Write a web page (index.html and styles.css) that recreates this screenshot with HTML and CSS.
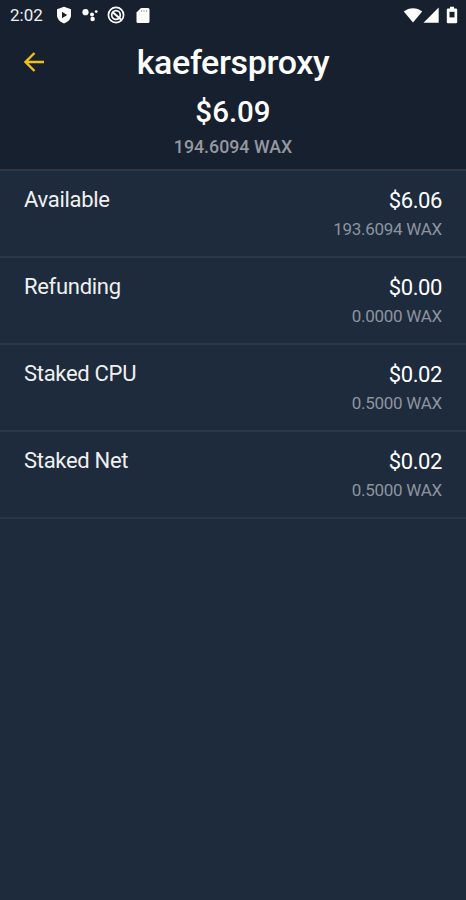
FILE: index.html
```html
<!DOCTYPE html>
<html lang="en">
  <head>
    <meta charset="UTF-8" />
    <meta name="viewport" content="width=device-width, initial-scale=1.0" />
    <title>kaefersproxy</title>
    <link rel="stylesheet" href="styles.css">
  </head>
  <body>
    <header class="header">
      <div class="status-bar">
        <span class="time">2:02</span>
        <svg class="icon-shield" width="16" height="18" viewBox="0 0 16 18">
          <path fill="#fff" d="M8 .8 15 3.2V9c0 4-3 7-7 8.4C4 16 1 13 1 9V3.2z" />
          <path fill="#172130" d="M6 5.8v6.4L11.2 9z" />
        </svg>
        <svg class="icon-dots" width="18" height="16" viewBox="0 0 18 16">
          <g fill="#fff">
            <circle cx="4.5" cy="5.2" r="3.1" />
            <circle cx="11" cy="7.4" r="2" />
            <circle cx="15.2" cy="4.6" r="1.4" />
            <circle cx="11.6" cy="12" r="2.2" />
          </g>
        </svg>
        <svg class="icon-circle" width="18" height="18" viewBox="0 0 18 18">
          <g fill="none" stroke="#fff">
            <circle cx="9" cy="9" r="7.6" stroke-width="1.7" />
            <circle cx="9" cy="9" r="4.3" stroke-width="1.7" />
            <path stroke-width="2" d="m5.5 6 8.5 7.5" />
          </g>
        </svg>
        <svg class="icon-sd" width="14" height="17" viewBox="0 0 14 17">
          <path fill="#fff" d="M5 1h7a1.5 1.5 0 0 1 1.5 1.5v12A1.5 1.5 0 0 1 12 16H2a1.5 1.5 0 0 1-1.5-1.5v-9z" />
          <path stroke="#172130" stroke-opacity=".35" d="M5.5 3v2M8 3v2M10.5 3v2" />
        </svg>
        <svg class="icon-wifi" width="20" height="17" viewBox="0 0 20 17">
          <path fill="#fff" d="M10 15.6.8 4.6C6 .1 14 .1 19.2 4.6z" />
        </svg>
        <svg class="icon-signal" width="16" height="16" viewBox="0 0 16 16">
          <path fill="#fff" d="M15.7.5v15.2H.5z" />
        </svg>
        <svg class="icon-battery" width="12" height="18" viewBox="0 0 12 18">
          <path fill="#fff" d="M4 .8h4v1.7h2a1.2 1.2 0 0 1 1.2 1.2V16a1.2 1.2 0 0 1-1.2 1.2H2A1.2 1.2 0 0 1 .8 16V3.7A1.2 1.2 0 0 1 2 2.5h2z" />
          <path fill="#172130" d="M3.5 5.8h5v5.6h-5z" />
        </svg>
      </div>

      <div class="title-bar">
        <svg class="back" width="22" height="22" viewBox="0 0 22 22">
          <path fill="none" stroke="#f2c012" stroke-width="2.4" d="M21 11H2.5M11.5 2 2.5 11l9 9" />
        </svg>
        <h1 class="title">kaefersproxy</h1>
      </div>
      <div class="total">$6.09</div>
      <div class="total-wax">194.6094 WAX</div>
    </header>

    <main class="balances">
      <div class="row">
        <span class="label">Available</span>
        <div class="values">
          <span class="usd">$6.06</span>
          <span class="wax">193.6094 WAX</span>
        </div>
      </div>
      <div class="row">
        <span class="label">Refunding</span>
        <div class="values">
          <span class="usd">$0.00</span>
          <span class="wax">0.0000 WAX</span>
        </div>
      </div>
      <div class="row">
        <span class="label">Staked CPU</span>
        <div class="values">
          <span class="usd">$0.02</span>
          <span class="wax">0.5000 WAX</span>
        </div>
      </div>
      <div class="row">
        <span class="label">Staked Net</span>
        <div class="values">
          <span class="usd">$0.02</span>
          <span class="wax">0.5000 WAX</span>
        </div>
      </div>
    </main>
  </body>
</html>
```

FILE: styles.css
```css
* {
  box-sizing: border-box;
}

body {
  margin: 0;
  min-height: 100vh;
  background-color: #1d2b3d;
  color: #fff;
  font-family: Roboto, sans-serif;
}

.header {
  height: 171px;
  background-color: #17202e;
  border-bottom: 2px solid #2b3a49;
  text-align: center;
}

.status-bar {
  display: flex;
  align-items: center;
  height: 30px;
  padding: 0 8px 0 10px;
}

.time {
  width: 46px;
  font-size: 17px;
  text-align: left;
  color: #f0f0f0;
}

.icon-dots {
  margin-left: 9px;
}

.icon-circle {
  margin-left: 8px;
}

.icon-sd {
  margin-left: 11px;
}

.icon-wifi {
  margin-left: auto;
}

.icon-battery {
  margin-left: 7px;
}

.title-bar {
  display: grid;
  grid-template-columns: 24px 1fr 24px;
  align-items: center;
  height: 64px;
  padding: 0 23px;
}

.title {
  margin: 0;
  font-size: 34px;
  font-weight: 500;
  line-height: 64px;
  letter-spacing: -0.37px;
}

.total {
  font-size: 29.5px;
  font-weight: 500;
  line-height: 36px;
}

.total-wax {
  font-size: 17.8px;
  font-weight: 500;
  line-height: 34px;
  color: #9498a0;
}

.row {
  display: flex;
  justify-content: space-between;
  height: 87px;
  padding: 14px 24px 0;
  border-bottom: 2px solid #293949;
}

.label {
  font-size: 22px;
  line-height: 30px;
  letter-spacing: -0.3px;
  color: #f0f0f0;
}

.values {
  display: flex;
  flex-direction: column;
  align-items: flex-end;
}

.usd {
  font-size: 22px;
  line-height: 31px;
  letter-spacing: -0.4px;
}

.wax {
  font-size: 17px;
  line-height: 26px;
  letter-spacing: -0.27px;
  color: #8d949d;
}
```
